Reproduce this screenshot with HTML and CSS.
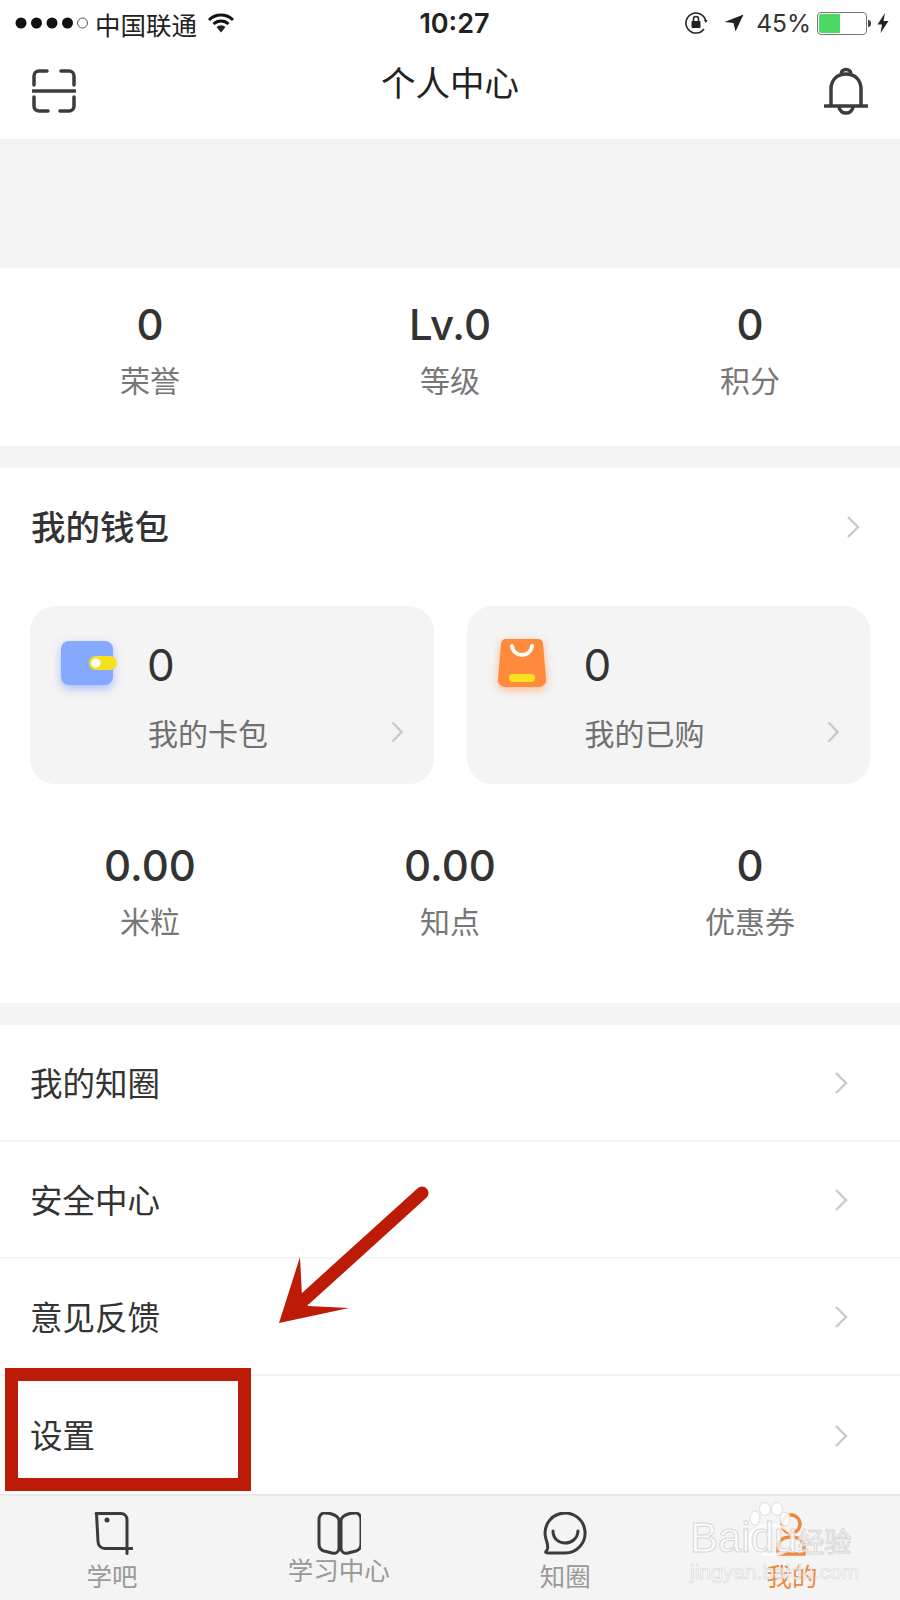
FILE: index.html
```html
<!DOCTYPE html>
<html lang="zh">
<head>
<meta charset="utf-8">
<title>个人中心</title>
<link rel="stylesheet" href="styles.css">
</head>
<body>
<div class="page">
  <div class="status">
    <div class="status-left">
      <svg class="dots" width="74" height="14" viewBox="0 0 74 14"><circle cx="6" cy="7" r="5.5"/><circle cx="21.500" cy="7" r="5.500"/><circle cx="37" cy="7" r="5.500"/><circle cx="52.500" cy="7" r="5.500"/><circle class="dot-off" cx="67.500" cy="7" r="5"/></svg>
      <span class="carrier">中国联通</span>
      <svg class="wifi" width="28" height="20" viewBox="0 0 28 20"><path d="M2 7a17 17 0 0 1 24 0M6.500 11a11 11 0 0 1 15 0" class="wifi-arc"/><path d="M9.500 14a7 7 0 0 1 9 0L14 19.500z" class="wifi-fill"/></svg>
    </div>
    <div class="time">10:27</div>
    <div class="status-right">
      <svg width="26" height="24" viewBox="0 0 26 24"><path d="M21.500 9A10 10 0 1 0 20 18" class="thin"/><path d="M20 9l3.500 0-1.700 3z" class="ink"/><rect x="7.500" y="10" width="9" height="7" rx="1" class="ink"/><path d="M9.500 10V8a2.500 2.500 0 0 1 5 0v2" class="thin"/></svg>
      <svg class="loc" width="20" height="18" viewBox="0 0 20 18"><path d="M19.500 0.500L0.500 8l9 1 2 8.500z" class="ink"/></svg>
      <span class="percent">45%</span>
      <div class="battery"><div class="battery-level"></div></div>
      <div class="battery-tip"></div>
      <svg class="bolt" width="12" height="20" viewBox="0 0 12 20"><path d="M8 0L0.500 11.500H5L3.500 20 11.500 8H6.500z" class="ink"/></svg>
    </div>
  </div>

  <div class="nav">
    <svg width="44" height="44" viewBox="0 0 44 44"><path class="icon-line" d="M15 2H7a5 5 0 0 0-5 5v9M29 2h8a5 5 0 0 1 5 5v9M1 22H43M2 28v9a5 5 0 0 0 5 5h9M42 28v9a5 5 0 0 1-5 5h-9"/></svg>
    <div class="nav-title">个人中心</div>
    <svg width="44" height="48" viewBox="0 0 44 48"><path class="icon-line" d="M1 39H43M7 39V22C7 13 13 7 22 7s15 6 15 15V39M17 7c0-6 10-6 10 0M15 40c1 8 13 8 14 0"/></svg>
  </div>

  <div class="banner"></div>

  <div class="stats stats-top">
    <div class="stat"><div class="num">0</div><div class="label">荣誉</div></div>
    <div class="stat"><div class="num">Lv.0</div><div class="label">等级</div></div>
    <div class="stat"><div class="num">0</div><div class="label">积分</div></div>
  </div>

  <div class="wallet">
    <div class="wallet-head">
      <span class="wallet-title">我的钱包</span>
      <svg class="chev" width="14" height="24" viewBox="0 0 14 24"><path d="M2 2l10 10L2 22"/></svg>
    </div>
    <div class="cards">
      <div class="card">
        <div class="card-top">
          <div class="wallet-icon"><div class="wallet-pill"></div></div>
          <div class="card-num">0</div>
        </div>
        <div class="card-bottom">
          <span class="card-label">我的卡包</span>
          <svg class="chev" width="12" height="22" viewBox="0 0 12 22"><path d="M1.500 1.500l9 9.500-9 9.500"/></svg>
        </div>
      </div>
      <div class="card">
        <div class="card-top">
          <svg class="bag-icon" width="48" height="48" viewBox="0 0 48 48"><path d="M8 0H40a5 5 0 0 1 5 4.500L48 40a7 7 0 0 1-7 8H7a7 7 0 0 1-7-8L3 4.500A5 5 0 0 1 8 0z" class="bag"/><path d="M14 7c2 12 18 12 20 0" class="bag-handle"/><rect x="11" y="35" width="26" height="8" rx="4" class="bag-bar"/></svg>
          <div class="card-num">0</div>
        </div>
        <div class="card-bottom">
          <span class="card-label">我的已购</span>
          <svg class="chev" width="12" height="22" viewBox="0 0 12 22"><path d="M1.500 1.500l9 9.500-9 9.500"/></svg>
        </div>
      </div>
    </div>
    <div class="stats stats-wallet">
      <div class="stat"><div class="num">0.00</div><div class="label">米粒</div></div>
      <div class="stat"><div class="num">0.00</div><div class="label">知点</div></div>
      <div class="stat"><div class="num">0</div><div class="label">优惠券</div></div>
    </div>
  </div>

  <div class="menu">
    <div class="row"><span>我的知圈</span><svg class="chev" width="14" height="24" viewBox="0 0 14 24"><path d="M2 2l10 10L2 22"/></svg></div>
    <div class="row"><span>安全中心</span><svg class="chev" width="14" height="24" viewBox="0 0 14 24"><path d="M2 2l10 10L2 22"/></svg></div>
    <div class="row"><span>意见反馈</span><svg class="chev" width="14" height="24" viewBox="0 0 14 24"><path d="M2 2l10 10L2 22"/></svg></div>
    <div class="row row-last"><span>设置</span><svg class="chev" width="14" height="24" viewBox="0 0 14 24"><path d="M2 2l10 10L2 22"/></svg></div>
  </div>

  <div class="tabbar">
    <div class="tab">
      <svg width="42" height="44" viewBox="0 0 42 44"><path class="tab-line" d="M5 1.500H30a6 6 0 0 1 6 6V41.500M41 36.500H14a7 7 0 0 1-7-7L5.500 1.500"/><circle cx="16" cy="8" r="2.500" class="tab-dot"/></svg>
      <span class="tab-label">学吧</span>
    </div>
    <div class="tab tab-raised">
      <svg width="44" height="44" viewBox="0 0 44 44"><path class="tab-line" d="M22 9C22 4 15 1 8 1 4 1 2 4 2 8V32C2 36 4 38 7 39L15 41C19 42 22 40 22 36zM24 9C24 4 31 1 38 1 42 1 44 4 44 8V32C44 36 42 38 39 39L31 41C27 42 24 40 24 36z"/></svg>
      <span class="tab-label">学习中心</span>
    </div>
    <div class="tab">
      <svg width="44" height="44" viewBox="0 0 44 44"><path class="tab-line" d="M4 38C2 40 2 41 5 41H22A20 20 0 1 0 3 27C4 31 6 35 4 38z"/><path class="tab-line" d="M10 19C10 35 34 35 35 19"/></svg>
      <span class="tab-label">知圈</span>
    </div>
    <div class="tab tab-active">
      <svg width="44" height="44" viewBox="0 0 44 44"><circle cx="21" cy="12" r="9" class="tab-person"/><path d="M8 42V36C8 28 14 25 21 25s13 3 13 11v6z" class="tab-person"/></svg>
      <span class="tab-label">我的</span>
    </div>
  </div>

  <div class="mark-box"></div>
  <svg class="mark-arrow" width="160" height="150" viewBox="0 0 160 150"><path class="arrow-shaft" d="M149 12L32 118"/><path class="arrow-head" d="M6 142L27 76 29 115 35 125 76 127z"/></svg>

  <div class="watermark">
    <svg class="paw" width="60" height="66" viewBox="0 0 60 66"><ellipse cx="7" cy="16" rx="5" ry="7"/><ellipse cx="17" cy="7" rx="5.500" ry="6.500"/><ellipse cx="29" cy="7" rx="5.500" ry="6.500"/><ellipse cx="37" cy="17" rx="5" ry="7"/><ellipse class="paw-pad" cx="23" cy="38" rx="22" ry="15"/></svg>
    <div class="wm-brand">Baidu<span class="wm-cn">经验</span></div>
    <div class="wm-url">jingyan.baidu.com</div>
  </div>
</div>
</body>
</html>
```
FILE: styles.css
```css
* { box-sizing: border-box; }
html, body { margin: 0; padding: 0; background: #fff; }
body { font-family: "Noto Sans CJK SC", "Noto Sans", sans-serif; }
.page {
  position: relative; width: 900px; height: 1600px; overflow: hidden;
  background: #f4f4f4; display: flex; flex-direction: column;
  font-family: Inter, "Noto Sans CJK SC", sans-serif; color: #333;
}
svg { display: block; flex: none; }

.status {
  height: 46px; background: #fff; padding: 0 11px 0 15px; color: #222;
  display: grid; grid-template-columns: 1fr auto 1fr; align-items: center;
}
.status-left, .status-right { display: flex; align-items: center; }
.status-right { justify-content: flex-end; }
.dots circle { fill: #111; }
.dots .dot-off { fill: #fff; stroke: #555; stroke-width: 1; }
.carrier { font-size: 25.500px; margin-left: 6px; margin-right: 10px; color: #222; }
.wifi-arc { fill: none; stroke: #111; stroke-width: 3; }
.wifi-fill, .ink { fill: #222; }
.thin { fill: none; stroke: #222; stroke-width: 1.600; }
.time { font-size: 27px; font-weight: 600; color: #222; margin-left: 5px; }
.loc { margin-left: 14px; }
.percent { font-size: 24.500px; color: #333; margin-left: 12px; margin-right: 6px; }
.battery { width: 50px; height: 23px; border: 1px solid #777; border-radius: 4px; padding: 1px; }
.battery-level { width: 21px; height: 100%; background: #4cd964; border-radius: 2px 0 0 2px; }
.battery-tip { width: 3px; height: 7px; background: #444; margin-left: 1px; border-radius: 0 3px 3px 0; }
.bolt { margin-left: 6px; }

.nav {
  height: 93px; background: #fff; padding: 0 32px 4px 32px;
  display: flex; align-items: center; justify-content: space-between;
}
.nav-title { font-size: 34.500px; color: #222; margin-bottom: 20px; }
.icon-line { fill: none; stroke: #3c3c3c; stroke-width: 3.500; stroke-linecap: round; }

.banner { height: 129px; background: #f3f3f3; }

.stats { display: grid; grid-template-columns: repeat(3, 1fr); background: #fff; }
.stats-top { height: 178px; padding: 30px 0 0 0; }
.stat { display: flex; flex-direction: column; align-items: center; }
.num { font-size: 42px; line-height: 54px; color: #333; font-weight: 500; }
.label { font-size: 30px; line-height: 44px; color: #777; margin-top: 7px; }

.wallet { margin-top: 22px; height: 535px; background: #fff; }
.wallet-head {
  height: 118px; padding: 0 40px 0 31px;
  display: flex; align-items: center; justify-content: space-between;
}
.wallet-title { font-size: 34.500px; font-weight: 500; color: #333; margin-bottom: 4px; }
.chev { flex: none; }
.chev path { fill: none; stroke: #c9c9c9; stroke-width: 2.400; }
.cards { display: flex; gap: 33px; padding: 20px 30px 0 30px; }
.card {
  flex: 1; height: 177px; background: #f4f4f4; border-radius: 26px;
  padding: 32px 31px 0 31px; display: flex; flex-direction: column;
  box-shadow: 0 1px 1px rgba(0, 0, 0, 0.05);
}
.card-top { display: flex; align-items: center; gap: 34px; height: 54px; }
.wallet-icon {
  position: relative; width: 52px; height: 44px; border-radius: 8px; margin-bottom: 4px;
  background: #84a9ff; box-shadow: 0 4px 10px rgba(100, 140, 255, 0.5);
}
.wallet-pill {
  position: absolute; left: 28px; top: 15px; width: 28px; height: 14px; border-radius: 7px;
  background: radial-gradient(circle at 7px 7px, #fff 0, #fff 4px, #f7e01f 5px);
}
.bag { fill: #ff8a3c; }
.bag-icon { margin-right: 4px; margin-bottom: 4px; filter: drop-shadow(0 3px 5px rgba(255, 130, 50, 0.5)); }
.bag-handle { fill: none; stroke: #fff; stroke-width: 4; stroke-linecap: round; }
.bag-bar { fill: #f9e11f; }
.card-num { font-size: 44px; color: #333; }
.card-bottom {
  display: flex; align-items: center; justify-content: space-between;
  padding-left: 87px; margin-top: 18px;
}
.card-label { font-size: 30px; color: #707070; }
.stats-wallet { margin-top: 56px; background: transparent; }

.menu { margin-top: 22px; background: #fff; display: flex; flex-direction: column; }
.row {
  height: 117px; padding: 0 52px 3px 30px; border-bottom: 2px solid #f5f5f5;
  display: flex; align-items: center; justify-content: space-between;
  font-size: 32.500px; color: #333;
}
.row .chev { margin-top: 4px; }
.row-last { height: 118px; border-bottom: none; }

.tabbar {
  flex: 1; background: #f4f4f4; border-top: 2px solid #e8e8e8;
  display: flex; gap: 146.700px; padding: 16px 0 0 72px;
}
.tab { width: 80px; display: flex; flex-direction: column; align-items: center; }
.tab-label { font-size: 25.500px; line-height: 32px; margin-top: 5px; color: #999; white-space: nowrap; }
.tab-raised .tab-label { margin-top: -1px; }
.tab-active .tab-label { color: #f0883e; }
.tab-line { fill: none; stroke: #3b3b3b; stroke-width: 3; stroke-linecap: round; stroke-linejoin: round; }
.tab-dot { fill: #3b3b3b; }
.tab-person { fill: none; stroke: #f0883e; stroke-width: 3.500; }

.mark-box {
  position: absolute; left: 5px; top: 1368px; width: 246px; height: 123px;
  border: 13px solid #bd1b07;
}
.mark-arrow { position: absolute; left: 273px; top: 1181px; }
.arrow-shaft { fill: none; stroke: #bd1b07; stroke-width: 13; stroke-linecap: round; }
.arrow-head { fill: #bd1b07; }

.watermark {
  position: absolute; left: 688px; top: 1502px; width: 170px; height: 80px;
  color: rgba(255, 255, 255, 0.7); font-family: "Liberation Sans", "Noto Sans CJK SC", sans-serif;
}
.paw { position: absolute; left: 60px; top: 0; fill: rgba(255, 255, 255, 0.85); stroke: #ddd; stroke-width: 1; }
.paw .paw-pad { fill: none; stroke: rgba(255, 255, 255, 0.8); stroke-width: 3; }
.wm-brand {
  position: absolute; left: 2px; top: 14px; font-size: 42px; line-height: 44px; white-space: nowrap;
  -webkit-text-stroke: 1px #d6d6d6;
}
.wm-cn { font-size: 27px; }
.wm-url {
  position: absolute; left: 2px; top: 58px; font-size: 21px; line-height: 24px; white-space: nowrap;
  -webkit-text-stroke: 0.6px #d6d6d6;
}
```
